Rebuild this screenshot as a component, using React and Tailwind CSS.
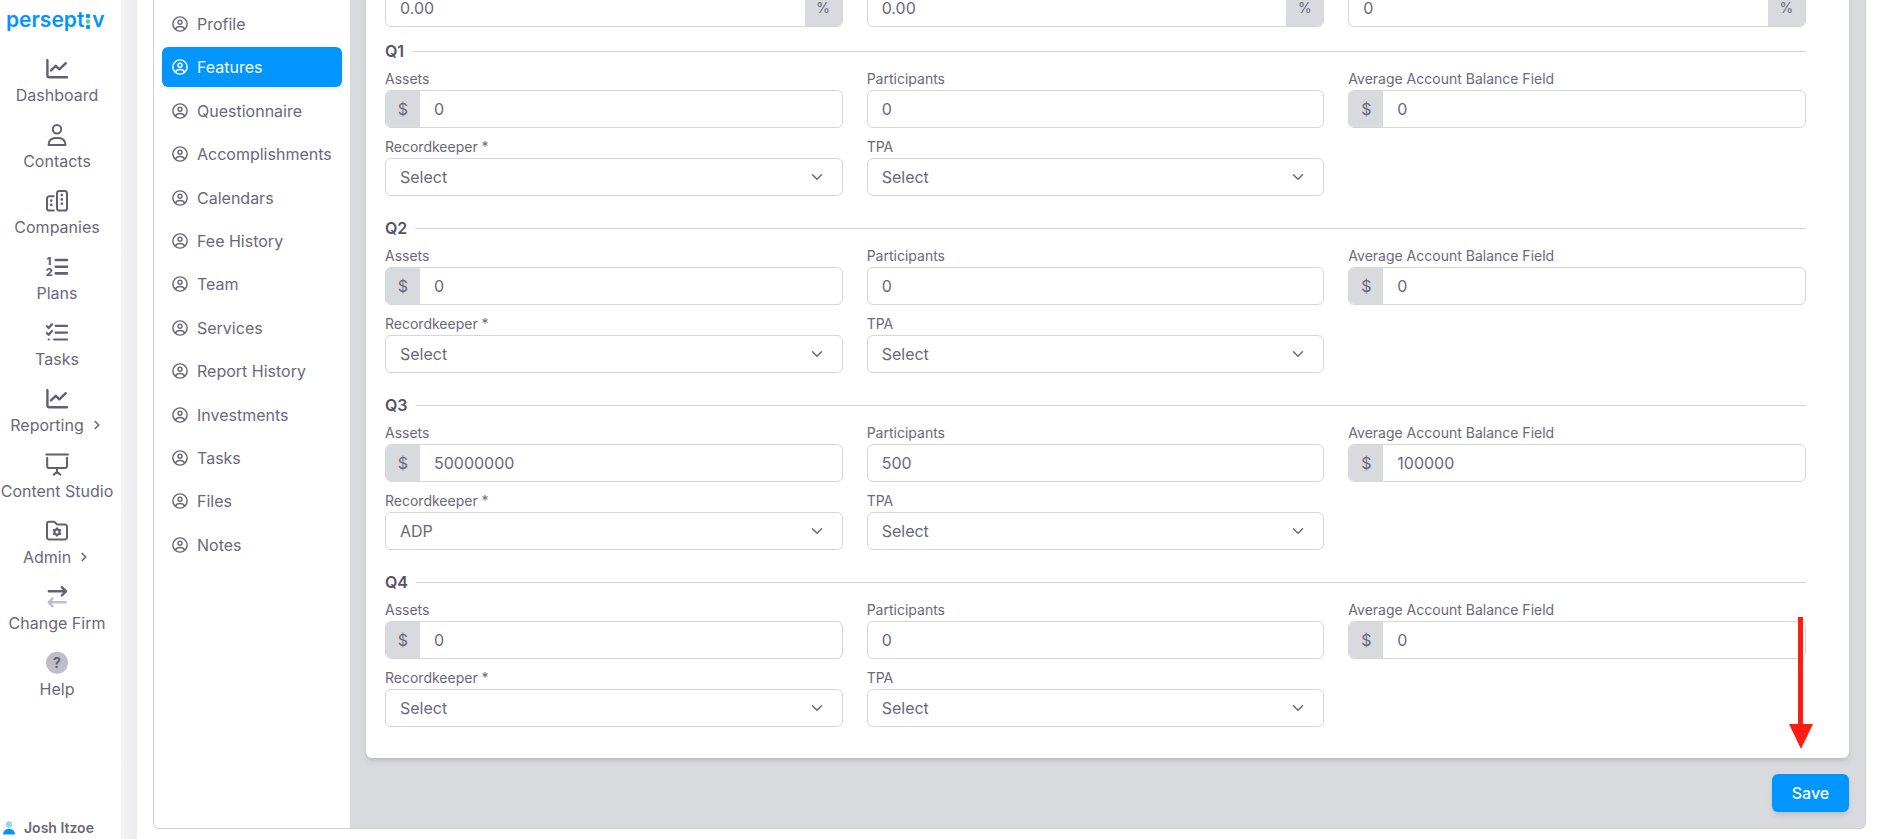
import { useId } from 'react'
import { ChevronDown, ChevronRight } from 'lucide-react'

const iconProps = {
  viewBox: '0 0 24 24',
  fill: 'none',
  stroke: 'currentColor',
  strokeWidth: 2,
  strokeLinecap: 'round',
  strokeLinejoin: 'round',
  'aria-hidden': true,
  className: 'size-6 text-[#625f72]',
}

function ChartIcon() {
  return (
    <svg {...iconProps} strokeWidth={2.4}>
      <path d="M2.4 3.3v15a2 2 0 0 0 2 2H22" />
      <path d="m6 13.4 4.8-4.6 3.5 3.5L20.8 6.2" />
    </svg>
  )
}

function ContactIcon() {
  return (
    <svg {...iconProps}>
      <circle cx="12" cy="6.2" r="4.2" />
      <path d="M3.6 22v-.8c0-3.5 3-6.2 6.6-6.2h3.6c3.6 0 6.6 2.7 6.6 6.2v.8z" />
    </svg>
  )
}

function BuildingsIcon() {
  return (
    <svg {...iconProps}>
      <rect x="12" y="2" width="10" height="19.6" rx="2.4" />
      <path d="M8.6 7.3H4.4A2.4 2.4 0 0 0 2 9.7v9.5a2.4 2.4 0 0 0 2.4 2.4h4.4" />
      <path d="M16.8 6v.01M16.8 10.4v.01M16.8 14.8v.01M6.3 11.6v.01M6.3 15.9v.01" strokeWidth={2.6} />
    </svg>
  )
}

function NumberedIcon() {
  return (
    <svg {...iconProps}>
      <path d="M10.8 5H22M10.8 11.7H22M10.8 18.4H22" strokeWidth={2.6} />
      <g fill="currentColor" stroke="none" fontSize="11" fontWeight="800">
        <text x="1.5" y="10">1</text>
        <text x="0.8" y="21.2">2</text>
      </g>
    </svg>
  )
}

function ChecklistIcon() {
  return (
    <svg {...iconProps} strokeWidth={2.2}>
      <path d="M10.6 4.8H22M10.6 11.7H22M9.2 18.5H22" />
      <path d="m2 5.2 1.7 1.7L7 3.2M2 12.1l1.7 1.7L7 10.1M3.7 18.5v.01" />
    </svg>
  )
}

function BoardIcon() {
  return (
    <svg {...iconProps}>
      <path d="M1.2 1.6h21.8M2.2 4.8v8.5a1.8 1.8 0 0 0 1.8 1.8h16.2a1.8 1.8 0 0 0 1.8-1.8V4.8" />
      <path d="M12 15.5v3.5M8.7 21.8 12 18.7l3.3 3.1" />
    </svg>
  )
}

function FolderGearIcon() {
  return (
    <svg {...iconProps}>
      <path d="M2 4.6A1.8 1.8 0 0 1 3.8 2.8h5.4l3 2.8h8A1.8 1.8 0 0 1 22 7.4v11.2a1.8 1.8 0 0 1-1.8 1.8H3.8A1.800 1.8 0 0 1 2 18.6z" />
      <circle cx="12" cy="13" r="2.6" strokeWidth={2.2} />
      <path d="M12 9.2v.01M12 16.8v.01M8.7 11.100v.01M15.3 11.1v.01M8.7 14.900v.01M15.3 14.9v.01" />
    </svg>
  )
}

function SwapIcon() {
  return (
    <svg {...iconProps} strokeWidth={2.4}>
      <path d="M3.8 6.3H21M16.8 2.2 21 6.3l-4.200 4.200" />
      <path d="M20.6 17.3H3.6M7.6 13.3l-4 4 4 4" stroke="#c0bec8" />
    </svg>
  )
}

function HelpIcon() {
  return (
    <svg {...iconProps}>
      <circle cx="12" cy="11.8" r="11" fill="#bfbdc7" stroke="none" />
      <text x="12" y="16.8" textAnchor="middle" fill="currentColor" stroke="none" fontSize="14" fontWeight="700">
        ?
      </text>
    </svg>
  )
}

function UserCircleIcon() {
  return (
    <svg {...iconProps} strokeWidth={2.2} className="size-4 shrink-0">
      <circle cx="12" cy="12" r="10.7" />
      <circle cx="12" cy="9.4" r="3" />
      <path d="M5.2 19.8c.8-2.600 3.500-4 6.800-4s6 1.400 6.800 4" />
    </svg>
  )
}

const mainNav = [
  { label: 'Dashboard', Icon: ChartIcon },
  { label: 'Contacts', Icon: ContactIcon },
  { label: 'Companies', Icon: BuildingsIcon },
  { label: 'Plans', Icon: NumberedIcon },
  { label: 'Tasks', Icon: ChecklistIcon },
  { label: 'Reporting', Icon: ChartIcon, expandable: true },
  { label: 'Content Studio', Icon: BoardIcon },
  { label: 'Admin', Icon: FolderGearIcon, expandable: true },
  { label: 'Change Firm', Icon: SwapIcon },
  { label: 'Help', Icon: HelpIcon },
]

const planNav = [
  'Profile',
  'Features',
  'Questionnaire',
  'Accomplishments',
  'Calendars',
  'Fee History',
  'Team',
  'Services',
  'Report History',
  'Investments',
  'Tasks',
  'Files',
  'Notes',
]

const quarters = [
  { name: 'Q1', assets: '0', participants: '0', average: '0', recordkeeper: 'Select' },
  { name: 'Q2', assets: '0', participants: '0', average: '0', recordkeeper: 'Select' },
  { name: 'Q3', assets: '50000000', participants: '500', average: '100000', recordkeeper: 'ADP' },
  { name: 'Q4', assets: '0', participants: '0', average: '0', recordkeeper: 'Select' },
]

function Logo() {
  return (
    <a
      href="#home"
      aria-label="perseptiv"
      className="flex h-9 items-center pl-[6px] text-[21px] leading-9 font-semibold text-[#0095ff]"
    >
      persept
      <svg viewBox="0 0 6 16" className="mx-px mt-1 h-4 w-[6px]" aria-hidden="true">
        <rect x="1" y="0" width="4" height="4" rx="1" fill="#0095ff" />
        <circle cx="3" cy="7.5" r="2.2" fill="#4fd17c" />
        <rect x="1" y="11" width="4" height="4" rx="1" fill="#0095ff" />
      </svg>
      v
    </a>
  )
}

function Sidebar() {
  return (
    <aside className="flex w-[121px] shrink-0 flex-col bg-white">
      <div className="pt-[2px]">
        <Logo />
      </div>
      <nav className="mt-[19px] flex w-[114px] flex-col">
        {mainNav.map(({ label, Icon, expandable }) => (
          <a key={label} href="#nav" className="flex h-[66px] flex-col items-center gap-1">
            <Icon />
            <span className="flex items-center gap-1.5 text-base leading-5 whitespace-nowrap">
              {label}
              {expandable && <ChevronRight className="size-[14px]" strokeWidth={3} />}
            </span>
          </a>
        ))}
      </nav>
      <div className="mt-auto flex items-center gap-2 pb-px pl-[3px] text-sm leading-5 font-semibold">
        <svg viewBox="0 0 12 14" className="mr-px h-[14px] w-3" aria-hidden="true">
          <circle cx="6" cy="3.5" r="3.2" fill="#99d5ff" />
          <path d="M0 13.5C0 10 2.5 8 6 8s6 2 6 5.5z" fill="#0095ff" />
        </svg>
        Josh Itzoe
      </div>
    </aside>
  )
}

function PlanNav() {
  return (
    <nav className="w-[196px] shrink-0 bg-white px-2 pt-1">
      <ul className="flex h-[561px] flex-col justify-between">
        {planNav.map((label) => (
          <li key={label}>
            <a
              href="#section"
              className={
                label === 'Features'
                  ? 'flex h-10 items-center gap-[9px] rounded-md bg-[#0095ff] pl-[10px] text-base text-white'
                  : 'flex h-10 items-center gap-[9px] rounded-md pl-[10px] text-base'
              }
            >
              <UserCircleIcon />
              {label}
            </a>
          </li>
        ))}
      </ul>
    </nav>
  )
}

function InputBox({ prefix, suffix, ...inputProps }) {
  return (
    <div className="flex h-[38px] overflow-hidden rounded-md border border-[#d6d6da] bg-white">
      {prefix && (
        <span className="flex w-[34px] shrink-0 items-center justify-center bg-[#d9dade] text-base leading-4">{prefix}</span>
      )}
      <input type="text" className="min-w-0 flex-1 bg-transparent px-[14px] text-base outline-none" {...inputProps} />
      {suffix && (
        <span className="flex w-[37px] shrink-0 items-center justify-center bg-[#d9dade] text-sm leading-4">{suffix}</span>
      )}
    </div>
  )
}

function TextField({ label, value, prefix }) {
  const id = useId()
  return (
    <div>
      <label htmlFor={id} className="mb-[2px] block text-sm leading-[18px]">
        {label}
      </label>
      <InputBox id={id} prefix={prefix} defaultValue={value} />
    </div>
  )
}

function SelectField({ label, value }) {
  const id = useId()
  return (
    <div>
      <label htmlFor={id} className="mb-[2px] block text-sm leading-[18px]">
        {label}
      </label>
      <div className="relative">
        <select
          id={id}
          defaultValue={value}
          className="block h-[38px] w-full appearance-none rounded-md border border-[#d6d6da] bg-white px-[14px] text-base outline-none"
        >
          <option>Select</option>
          <option>ADP</option>
        </select>
        <ChevronDown className="pointer-events-none absolute top-[10px] right-[17px] size-[18px]" />
      </div>
    </div>
  )
}

function Quarter({ quarter }) {
  return (
    <section className="mb-[22px]">
      <div className="mb-2 flex items-center gap-2">
        <h2 className="text-base leading-[21px] font-semibold text-[#55526a]">{quarter.name}</h2>
        <hr className="flex-1 border-[#d6d6da]" />
      </div>
      <div className="grid grid-cols-3 gap-x-6 gap-y-[10px]">
        <TextField label="Assets" prefix="$" value={quarter.assets} />
        <TextField label="Participants" value={quarter.participants} />
        <TextField label="Average Account Balance Field" prefix="$" value={quarter.average} />
        <SelectField label="Recordkeeper *" value={quarter.recordkeeper} />
        <SelectField label="TPA" value="Select" />
      </div>
    </section>
  )
}

function RedArrow() {
  return (
    <svg viewBox="0 0 24 132" className="pointer-events-none absolute right-9 bottom-[9px] h-[132px] w-6" aria-hidden="true">
      <path d="M9 0h5v107h10l-12 25L0 107h9z" fill="#ff1d0f" />
    </svg>
  )
}

export default function App() {
  return (
    <div className="flex h-screen min-h-[839px] overflow-hidden bg-white font-['Inter',sans-serif] text-[#6b687a]">
      <Sidebar />
      <div className="w-4 shrink-0 bg-linear-to-r from-[#f5f5f8] to-[#ebebef]" />
      <main className="min-w-0 flex-1 pr-[14px] pl-4">
        <div className="flex overflow-hidden rounded-b-md border border-t-0 border-[#cfcfd4]">
          <PlanNav />
          <form className="min-w-0 flex-1 bg-[#d9dade] px-4 pb-4">
            <div className="relative rounded-b-md bg-white pr-[43px] pb-[9px] pl-[19px] shadow-md">
              {/* tail of the rates row, scrolled past the top edge */}
              <div className="-mt-[11px] mb-[14px] grid grid-cols-3 gap-x-6">
                <InputBox aria-label="Rate 1" suffix="%" defaultValue="0.00" />
                <InputBox aria-label="Rate 2" suffix="%" defaultValue="0.00" />
                <InputBox aria-label="Rate 3" suffix="%" defaultValue="0" />
              </div>
              {quarters.map((quarter) => (
                <Quarter key={quarter.name} quarter={quarter} />
              ))}
              <RedArrow />
            </div>
            <div className="mt-4 flex justify-end">
              <button type="button" className="h-[38px] w-[77px] rounded-md bg-[#0095ff] text-base font-medium text-white shadow-md">
                Save
              </button>
            </div>
          </form>
        </div>
      </main>
    </div>
  )
}
